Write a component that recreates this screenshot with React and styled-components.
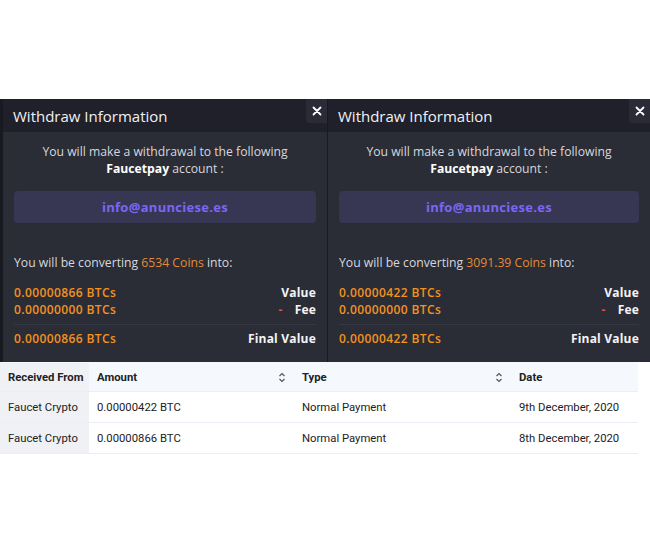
import React from "react";
import styled, { createGlobalStyle } from "styled-components";

const Global = createGlobalStyle`
  html, body { margin: 0; padding: 0; background: #ffffff; }
  body { font-family: "Open Sans", "Liberation Sans", sans-serif; }
`;

const Page = styled.div`
  width: 650px;
  height: 550px;
  padding-top: 99px;
  box-sizing: border-box;
  overflow: hidden;
`;

const Panels = styled.div`
  display: flex;
  height: 263px;
  background: #1c1d25;
`;

const Panel = styled.div`
  position: relative;
  width: ${(p) => p.$w}px;
  border-left: ${(p) => p.$edge}px solid #191a21;
  display: flex;
  flex-direction: column;
  background: #2a2c36;
  box-sizing: border-box;
`;

const Header = styled.div`
  height: 33px;
  background: #1f202a;
  display: flex;
  align-items: center;
  padding-left: 10px;
  color: #f1f1f4;
  font-size: 15px;
`;

const Close = styled.div`
  position: absolute;
  top: 0;
  right: 0;
  width: 21px;
  height: 24px;
  background: #2a2b36;
  border-bottom-left-radius: 4px;
  display: flex;
  align-items: center;
  justify-content: center;
`;

const Body = styled.div`
  padding: 11px 11px 0 11px;
  display: flex;
  flex-direction: column;
  color: #d6d7de;
  font-size: 12.2px;
`;

const Intro = styled.div`
  text-align: center;
  line-height: 17px;
  b { color: #ffffff; font-weight: 700; }
`;

const Email = styled.div`
  margin-top: 14px;
  height: 32px;
  border-radius: 4px;
  background: #373754;
  color: #7c66f2;
  font-weight: 700;
  font-size: 13px;
  display: flex;
  align-items: center;
  justify-content: center;
  letter-spacing: 0.3px;
`;

const Converting = styled.div`
  margin-top: 31px;
  span { color: #e38b35; }
`;

const Lines = styled.div`
  margin-top: 13px;
  display: flex;
  flex-direction: column;
`;

const Line = styled.div`
  display: flex;
  justify-content: space-between;
  align-items: center;
  height: 17px;
  font-size: 12px;
  font-weight: 600;
  letter-spacing: 0.4px;
`;

const Btc = styled.span`
  color: #f2921e;
`;

const Label = styled.span`
  color: #f4f4f6;
  font-weight: 700;
  letter-spacing: 0.2px;
  i { font-style: normal; color: #e0524e; margin-right: 12px; }
`;

const Divider = styled.div`
  height: 1px;
  background: #353743;
  margin: 6px 0 5px;
`;

const Table = styled.div`
  width: 638px;
  font-family: Roboto, "Liberation Sans", sans-serif;
  font-size: 11.3px;
  color: #222;
`;

const Row = styled.div`
  display: grid;
  grid-template-columns: 89px 205px 217px 127px;
  height: ${(p) => (p.$head ? 30 : 31)}px;
  padding-top: ${(p) => (p.$head ? 1 : 0)}px;
  border-bottom: 1px solid #eaeef5;
  background: ${(p) => (p.$head ? "#f5f8fd" : "#ffffff")};
  font-weight: ${(p) => (p.$head ? 700 : 400)};
  box-sizing: border-box;
`;

const Cell = styled.div`
  display: flex;
  align-items: center;
  justify-content: space-between;
  padding: 0 8px;
  background: ${(p) => (p.$first ? "#eff1f4" : "transparent")};
  white-space: nowrap;
`;

const Sort = () => (
  <svg width="8" height="11" viewBox="0 0 8 11" fill="none" stroke="#555" strokeWidth="1.2">
    <path d="M1.5 4 L4 1.5 L6.5 4" />
    <path d="M1.5 7 L4 9.5 L6.5 7" />
  </svg>
);

const X = () => (
  <svg width="10" height="10" viewBox="0 0 10 10" stroke="#ffffff" strokeWidth="1.8" strokeLinecap="round">
    <path d="M1.5 1.5 L8.5 8.5 M8.5 1.5 L1.5 8.5" />
  </svg>
);

const WithdrawPanel = ({ w, edge, coins, btc }) => (
  <Panel $w={w} $edge={edge}>
    <Header>Withdraw Information</Header>
    <Close><X /></Close>
    <Body>
      <Intro>
        You will make a withdrawal to the following
        <br />
        <b>Faucetpay</b> account :
      </Intro>
      <Email>info@anunciese.es</Email>
      <Converting>
        You will be converting <span>{coins} Coins</span> into:
      </Converting>
      <Lines>
        <Line><Btc>{btc} BTCs</Btc><Label>Value</Label></Line>
        <Line><Btc>0.00000000 BTCs</Btc><Label><i>-</i>Fee</Label></Line>
        <Divider />
        <Line><Btc>{btc} BTCs</Btc><Label>Final Value</Label></Line>
      </Lines>
    </Body>
  </Panel>
);

const rows = [
  ["Faucet Crypto", "0.00000422 BTC", "Normal Payment", "9th December, 2020"],
  ["Faucet Crypto", "0.00000866 BTC", "Normal Payment", "8th December, 2020"],
];

export default function App() {
  return (
    <>
      <Global />
      <Page>
        <Panels>
          <WithdrawPanel w={327} edge={3} coins="6534" btc="0.00000866" />
          <WithdrawPanel w={323} edge={1} coins="3091.39" btc="0.00000422" />
        </Panels>
        <Table>
          <Row $head>
            <Cell $first>Received From</Cell>
            <Cell>Amount<Sort /></Cell>
            <Cell>Type<Sort /></Cell>
            <Cell>Date</Cell>
          </Row>
          {rows.map((r, i) => (
            <Row key={i}>
              <Cell $first>{r[0]}</Cell>
              <Cell>{r[1]}</Cell>
              <Cell>{r[2]}</Cell>
              <Cell>{r[3]}</Cell>
            </Row>
          ))}
        </Table>
      </Page>
    </>
  );
}
